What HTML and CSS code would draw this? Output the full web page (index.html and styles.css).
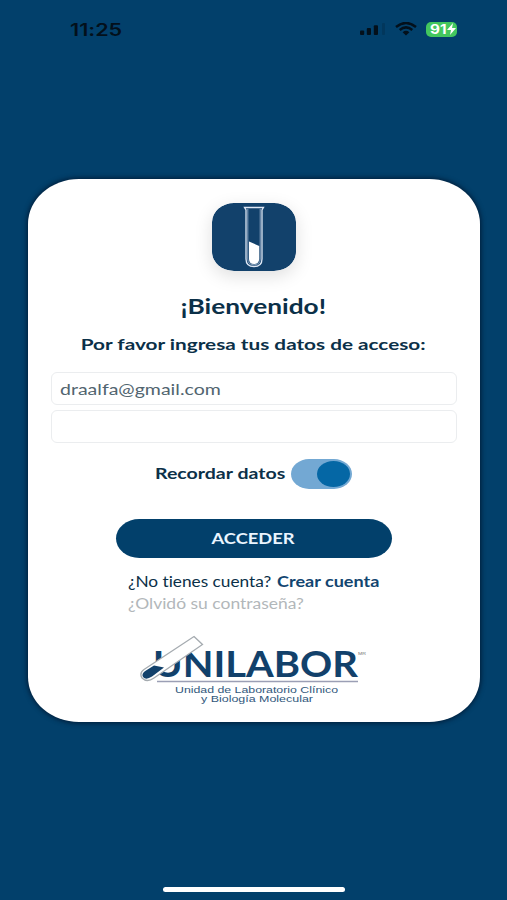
FILE: index.html
```html
<!DOCTYPE html>
<html lang="es">
<head>
<meta charset="utf-8">
<meta name="viewport" content="width=device-width, initial-scale=1">
<title>Unilabor</title>
<link rel="stylesheet" href="styles.css">
</head>
<body>
<header class="status">
  <span class="time"><span class="wide">11:25</span></span>
  <div class="indicators">
    <svg class="signal" width="25" height="12" viewBox="0 0 25 12">
      <rect x="0" y="7.500" width="4.200" height="4.500" rx="1"/><rect x="6.800" y="5" width="4.200" height="7" rx="1"/><rect x="13.800" y="2.300" width="4.200" height="9.700" rx="1"/><rect x="22" y="0" width="3" height="12" rx="1" opacity=".18"/>
    </svg>
    <svg class="wifi" width="22" height="14" viewBox="0 0 22 14">
      <path d="M1 5Q11-3 21 5M4.700 8Q11 2.800 17.300 8" fill="none" stroke="#03101b" stroke-width="2.500"/><path d="M7.600 10.300Q11 7.400 14.400 10.300L11 13.400Z"/>
    </svg>
    <div class="battery"><span class="wide">91</span><svg width="9" height="12" viewBox="0 0 9 12"><path d="M6 0L0 7H4L3 12L9 5H5Z" fill="#fff"/></svg></div>
  </div>
</header>
<main class="card">
  <svg class="app-icon" width="84" height="68" viewBox="0 0 84 68">
    <rect width="84" height="68" rx="22" ry="19" fill="#12416b"/>
    <path d="M32.500 4.500H51.500L50 7V56Q50 63.500 42 63.500T34 56V7Z" fill="none" stroke="#dfe8f5" stroke-width="1.300"/>
    <path d="M35.800 6V56Q35.800 61.800 42 61.800T48.200 56V6" fill="none" stroke="#a9bdd5" stroke-width=".8"/>
    <path d="M37 38.500L47.200 43V56Q47 61 42 61T37 56Z" fill="#fff"/>
  </svg>
  <h1 class="title"><span class="wide">¡Bienvenido!</span></h1>
  <p class="subtitle"><span class="wide">Por favor ingresa tus datos de acceso:</span></p>
  <form class="form">
    <div class="field"><span class="wide">draalfa@gmail.com</span></div>
    <div class="field"></div>
    <div class="remember"><span class="label"><span class="wide">Recordar datos</span></span><div class="toggle"><div class="knob"></div></div></div>
    <button class="submit" type="button"><span class="wide">ACCEDER</span></button>
  </form>
  <div class="links">
    <div class="signup"><span class="question"><span class="wide">¿No tienes cuenta?</span></span><span class="create"><span class="wide">Crear cuenta</span></span></div>
    <div class="forgot"><span class="wide">¿Olvidó su contraseña?</span></div>
  </div>
  <svg class="brand" width="230" height="72" viewBox="0 0 230 72">
    <text class="brand-name" x="14" y="43.300" textLength="205" lengthAdjust="spacingAndGlyphs">UNILABOR</text>
    <path d="M55 2.500L63.500 10.500L15 44Q8 49 3 44Q0 39 5 35.500Z" fill="#fff" stroke="#a5abb0" stroke-width="1.300"/>
    <path d="M7 36.500L15 31.500L25 33.500L13 42.500Q7 46.500 4 43Q2 39.500 7 36.500Z" fill="#12416b"/>
    <path d="M18 47.500H219" stroke="#9b9fb5" stroke-width="1.300"/>
    <text class="brand-line" x="36" y="58.500" textLength="163" lengthAdjust="spacingAndGlyphs">Unidad de Laboratorio Clínico</text>
    <text class="brand-line" x="62" y="67.700" textLength="112" lengthAdjust="spacingAndGlyphs">y Biología Molecular</text>
    <text class="mark" x="219" y="20.500" textLength="8" lengthAdjust="spacingAndGlyphs">MR</text>
  </svg>
</main>
<div class="home-bar"></div>
</body>
</html>
```

FILE: styles.css
```css
* { box-sizing: border-box; }
body {
  margin: 0;
  width: 507px;
  height: 900px;
  overflow: hidden;
  background: #02406b;
  color: #0b3048;
  font-family: Lato, "Liberation Sans", sans-serif;
  font-variant-ligatures: none;
  display: flex;
  flex-direction: column;
  align-items: center;
}
.wide {
  display: inline-block;
  white-space: nowrap;
  transform: scaleX(1.22);
  transform-origin: left center;
}
.status {
  width: 100%;
  height: 179px;
  flex: none;
  padding: 19px 50px 0 70px;
  display: flex;
  justify-content: space-between;
  align-items: flex-start;
  font-family: Inter, sans-serif;
  color: #03101b;
}
.time { font-size: 17px; line-height: 22px; font-weight: 600; }
.time .wide { transform: scaleX(1.27); }
.indicators { display: flex; align-items: center; height: 20px; fill: #03101b; }
.wifi { margin-left: 10px; }
.battery {
  width: 31px;
  height: 15px;
  margin-left: 9px;
  padding-left: 4px;
  border-radius: 5px;
  background: #43c75e;
  color: #fff;
  font-size: 12.500px;
  line-height: 15px;
  font-weight: 700;
  display: flex;
  align-items: center;
  gap: 3px;
}
.card {
  width: 452px;
  height: 543px;
  flex: none;
  padding-top: 24px;
  background: #fff;
  border-radius: 51px / 45px;
  box-shadow: 0 0 5px 1px #001b36;
  display: flex;
  flex-direction: column;
  align-items: center;
}
.app-icon { flex: none; border-radius: 22px / 19px; box-shadow: 0 5px 18px rgba(0, 0, 0, .13); }
h1, p { margin: 0; }
.title { margin-top: 22px; height: 26px; font-size: 21px; line-height: 26px; font-weight: 700; }
.subtitle { margin-top: 14px; height: 22px; font-size: 16px; line-height: 22px; font-weight: 700; }
.title .wide, .subtitle .wide, .submit .wide { transform-origin: center; }
.title .wide { transform: scaleX(1.25); }
.subtitle .wide { transform: scaleX(1.295); }
.form { width: 406px; margin-top: 17px; display: flex; flex-direction: column; align-items: center; }
.field {
  width: 100%;
  height: 33px;
  margin-bottom: 5px;
  padding-left: 8px;
  border: 1px solid #ebedef;
  border-radius: 6px;
  color: #526570;
  font-size: 16px;
  line-height: 31px;
}
.remember { width: 100%; height: 30px; margin-top: 11px; padding-left: 104px; display: flex; align-items: center; }
.label { width: 136px; height: 24px; font-size: 16px; line-height: 22px; font-weight: 700; }
.toggle { width: 61px; height: 30px; padding: 2px; border-radius: 18px / 15px; background: #73a8d3; display: flex; justify-content: flex-end; }
.knob { width: 33px; height: 26px; border-radius: 50%; background: #0567a5; }
.submit {
  width: 276px;
  height: 39px;
  margin-top: 30px;
  padding: 0;
  border: 0;
  border-radius: 24px / 20px;
  background: #02406b;
  color: #eaf5ff;
  font: 700 15px/39px Lato, sans-serif;
}
.links { width: 252px; margin-top: 13px; font-size: 14.500px; line-height: 22px; }
.signup { display: flex; }
.question { width: 149px; }
.question .wide { transform: scaleX(1.19); }
.create { color: #124570; font-weight: 700; }
.create .wide { transform: scaleX(1.245); }
.forgot { color: #b2b7ba; }
.forgot .wide { transform: scaleX(1.205); }
.brand { flex: none; margin-top: 19px; }
.brand-name { font: 700 36px Lato, sans-serif; fill: #12416b; }
.brand-line { font: 9.500px "Liberation Sans", sans-serif; fill: #31587c; }
.mark { font: 4px "Liberation Sans", sans-serif; fill: #777; }
.home-bar { width: 182px; height: 5px; margin-top: 165px; border-radius: 3px; background: #fff; flex: none; }
```
